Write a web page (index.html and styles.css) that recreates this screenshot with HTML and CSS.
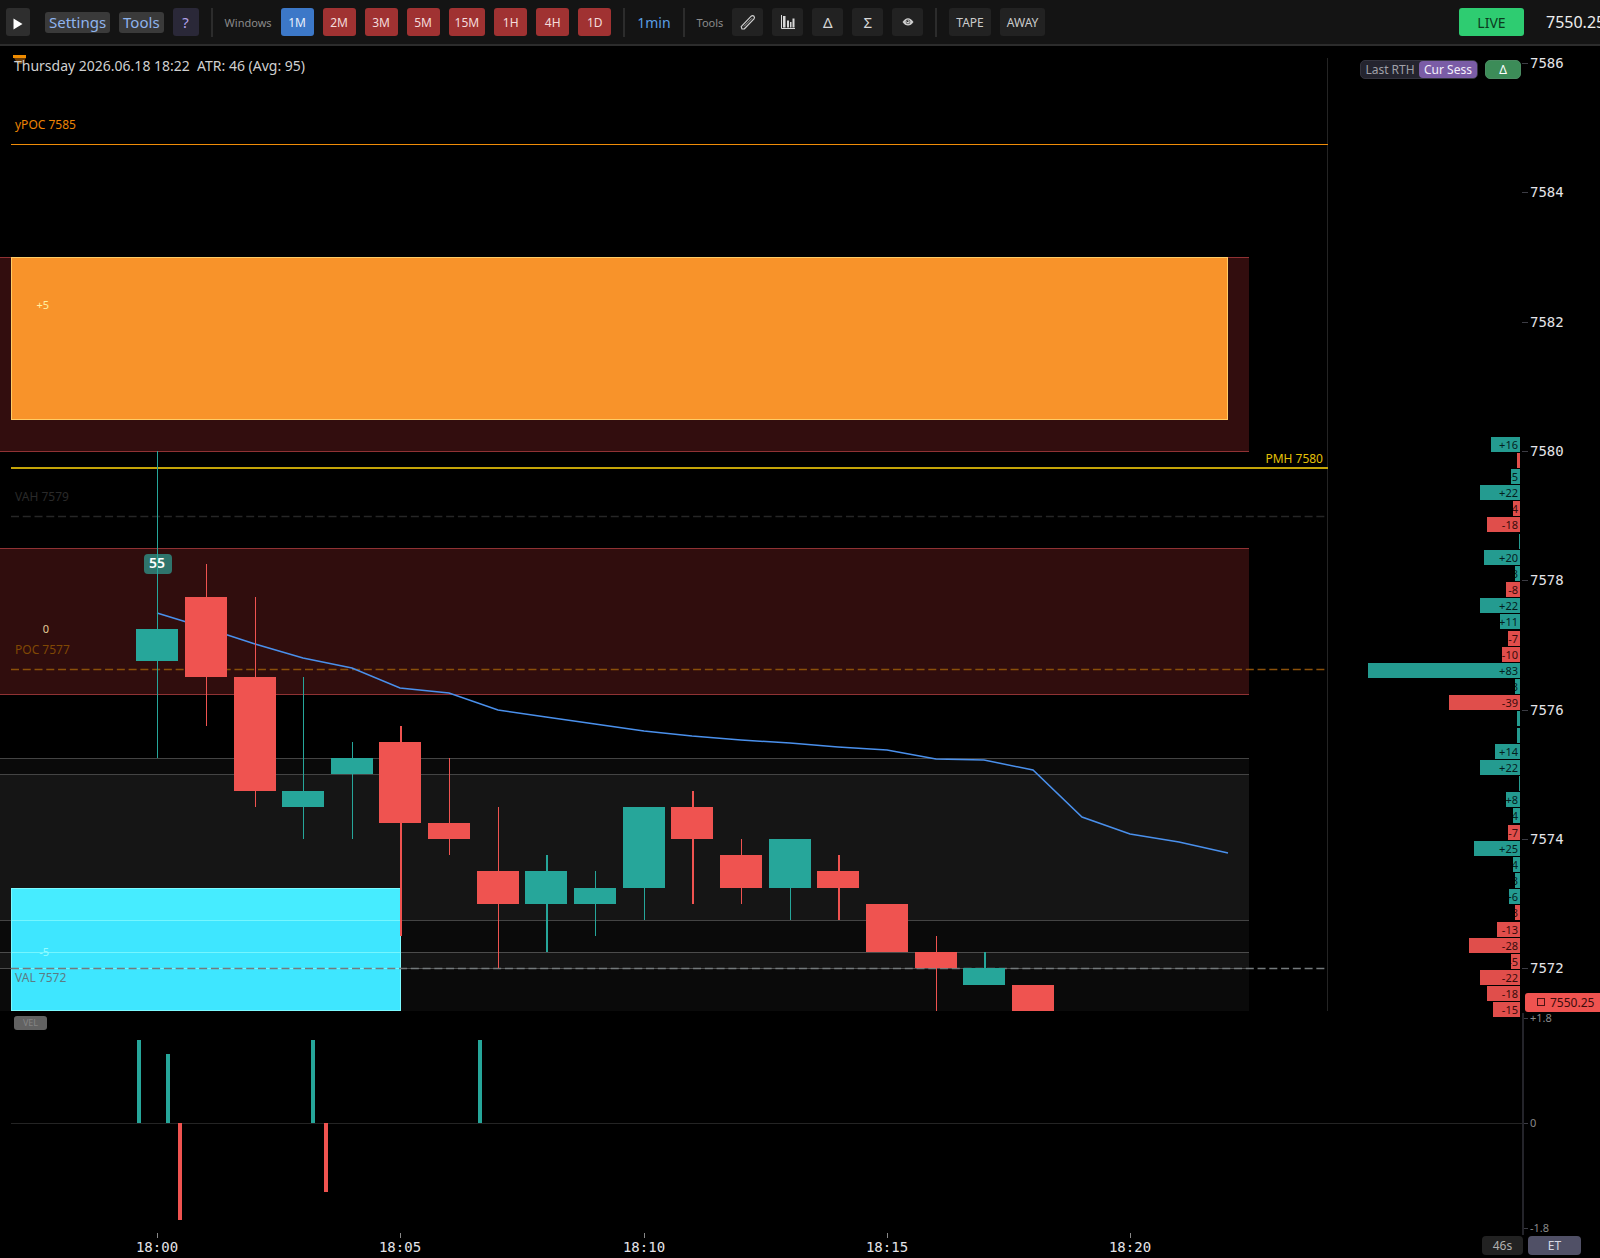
FILE: index.html
```html
<!DOCTYPE html>
<html lang="en">
<head>
<meta charset="utf-8">
<meta name="viewport" content="width=device-width, initial-scale=1">
<title>7550.25 – 1min chart</title>
<link rel="stylesheet" href="styles.css">
</head>
<body>
<header class="toolbar">
  <button class="btn btn-play" type="button" aria-label="Play">
    <svg width="10" height="12" viewBox="0 0 10 12" aria-hidden="true"><path d="M0.500 0.500L9.500 6L0.500 11.500Z" fill="#fff"/></svg>
  </button>
  <nav class="menus">
    <button class="menu" type="button">Settings</button>
    <button class="menu" type="button">Tools</button>
    <button class="btn btn-help" type="button">?</button>
  </nav>
  <span class="divider"></span>
  <span class="caption">Windows</span>
  <div class="group group-windows">
    <button class="btn btn-window is-active" type="button">1M</button>
    <button class="btn btn-window" type="button">2M</button>
    <button class="btn btn-window" type="button">3M</button>
    <button class="btn btn-window" type="button">5M</button>
    <button class="btn btn-window" type="button">15M</button>
    <button class="btn btn-window" type="button">1H</button>
    <button class="btn btn-window" type="button">4H</button>
    <button class="btn btn-window" type="button">1D</button>
  </div>
  <span class="divider"></span>
  <span class="interval">1min</span>
  <span class="divider"></span>
  <span class="caption">Tools</span>
  <div class="group group-tools">
    <button class="btn btn-tool" type="button" aria-label="Draw">
      <svg width="16" height="16" viewBox="0 0 16 16" aria-hidden="true"><path d="M1.200 12.600L11.200 2.200Q12.600 1 14 2.300Q15 3.500 14 4.900L4.200 15L2 15Z" fill="none" stroke="#d0d0d0" stroke-width="1.200" stroke-linejoin="round"/><path d="M4 12.400L12 4.300" fill="none" stroke="#a0a0a0" stroke-width="1"/></svg>
    </button>
    <button class="btn btn-tool" type="button" aria-label="Volume profile">
      <svg width="16" height="16" viewBox="0 0 16 16" aria-hidden="true"><path d="M1.500 1V14.500H15" fill="none" stroke="#d8d8d8" stroke-width="1"/><path d="M3 2h2.500v11.500H3zM7 6.500h2v7H7zM10 8h1.500v5.500H10zM12.500 4.500h2v9h-2z" fill="#d8d8d8"/></svg>
    </button>
    <button class="btn btn-tool" type="button">Δ</button>
    <button class="btn btn-tool" type="button">Σ</button>
    <button class="btn btn-tool" type="button" aria-label="Visibility">
      <svg width="12" height="10" viewBox="0 0 12 10" aria-hidden="true"><path d="M0.500 5Q3 1.200 6 1.200T11.500 5Q9 8.600 6 8.600T0.500 5Z" fill="#cfcfcf"/><circle cx="6" cy="4.800" r="2.400" fill="#505050"/><circle cx="6" cy="4.800" r="1.700" fill="#cfcfcf"/><circle cx="5.600" cy="4.200" r="0.900" fill="#303030"/></svg>
    </button>
  </div>
  <span class="divider"></span>
  <div class="group group-text">
    <button class="btn btn-text" type="button">TAPE</button>
    <button class="btn btn-text" type="button">AWAY</button>
  </div>
  <button class="btn btn-live" type="button">LIVE</button>
  <output class="last-price">7550.25</output>
</header>

<main class="chart">
  <svg class="canvas" id="chart" role="img" aria-label="One minute candlestick chart"></svg>
  <p class="status">Thursday 2026.06.18 18:22&nbsp; ATR: 46 (Avg: 95)</p>
  <div class="profile-controls">
    <div class="segmented">
      <button class="segment" type="button">Last RTH</button>
      <button class="segment is-active" type="button">Cur Sess</button>
    </div>
    <button class="delta-toggle" type="button">Δ</button>
  </div>
  <button class="vel" type="button">VEL</button>
  <div class="corner">
    <button class="chip" type="button">46s</button>
    <button class="chip chip-zone" type="button">ET</button>
  </div>
</main>
<script src="chart.js"></script>
</body>
</html>
```
FILE: styles.css
```css
* {
  box-sizing: border-box;
}

body {
  margin: 0;
  min-height: 100vh;
  display: flex;
  flex-direction: column;
  overflow: hidden;
  background: #000;
  color: #ccc;
  font-family: "Noto Sans", "Open Sans", sans-serif;
}

button {
  margin: 0;
  padding: 0;
  border: 0;
  font: inherit;
  color: inherit;
  white-space: nowrap;
  cursor: pointer;
}

/* Toolbar */

.toolbar {
  flex: none;
  display: flex;
  align-items: center;
  height: 46px;
  padding-left: 6px;
  background: #141414;
  border-bottom: 2px solid #2c2c2c;
  white-space: nowrap;
}

.toolbar > * {
  flex: none;
}

.btn {
  display: flex;
  align-items: center;
  justify-content: center;
  height: 28px;
  border-radius: 3px;
  font-size: 12px;
}

.btn-play {
  width: 24px;
  padding-top: 4px;
  background: #2e2e2e;
}

.menus {
  display: flex;
  align-items: center;
  gap: 9px;
  margin-left: 15px;
}

.menu {
  height: 21px;
  padding: 0 4px;
  border-radius: 3px;
  background: #3a3a3a;
  color: #8fb4ee;
  font-size: 15px;
  line-height: 20px;
}

.btn-help {
  width: 26px;
  background: #2a2838;
  color: #b4a4ec;
  font-size: 15px;
}

.divider {
  width: 2px;
  height: 29px;
  margin: 0 12px;
  background: #2c2c2c;
}

.caption {
  color: #8a8a8a;
  font-size: 11px;
}

.group {
  display: flex;
  gap: 9px;
  margin-left: 9px;
}

.btn-window {
  min-width: 33px;
  padding: 0 6px;
  background: #a03232;
  color: #f4dcdc;
}

.btn-window.is-active {
  background: #3c78c8;
  color: #e8f0fc;
}

.interval {
  color: #5a9fe6;
  font-size: 14px;
}

.btn-tool {
  width: 31px;
  background: #222;
  color: #d8d8d8;
  font-size: 15px;
}

.group-text {
  margin-left: 0;
}

.btn-text {
  padding: 0 7px;
  background: #222;
  color: #ccc;
}

.toolbar .btn-live {
  width: 65px;
  margin-left: auto;
  background: #2ecc71;
  color: #0c3a1e;
  font-size: 14px;
}

.last-price {
  width: 54px;
  margin-left: 22px;
  color: #eee;
  font-size: 16px;
}

/* Chart */

.chart {
  position: relative;
  flex: 1;
  min-height: 600px;
}

.canvas {
  position: absolute;
  inset: 0;
  width: 100%;
  height: 100%;
}

.canvas text {
  font-family: "Noto Sans", "Open Sans", sans-serif;
  font-size: 12px;
}

.canvas .axis-label {
  font-family: "DejaVu Sans Mono", monospace;
  font-size: 14px;
  fill: #e4e4e8;
}

.canvas .delta,
.canvas .velocity-label {
  font-size: 11px;
}

.canvas .velocity-label {
  fill: #8a8a8a;
}

.canvas .badge {
  font-size: 14px;
  font-weight: 600;
  fill: #fff;
}

.status {
  position: absolute;
  top: 10px;
  left: 14px;
  margin: 0;
  color: #d0d0d0;
  font-size: 14px;
  line-height: 20px;
}

.profile-controls {
  position: absolute;
  top: 14px;
  right: 79px;
  display: flex;
  gap: 7px;
  font-size: 12px;
  line-height: 17px;
}

.segmented {
  display: flex;
  border: 1px solid #34343e;
  border-radius: 5px;
  background: #24242e;
}

.segment {
  width: 58px;
  border-radius: 4px;
  background: none;
  color: #a0a0a8;
  font-size: 12px;
}

.segment.is-active {
  background: #7a5ca6;
  color: #f4f0fc;
}

.delta-toggle {
  width: 36px;
  border: 1px solid #4a8c62;
  border-radius: 5px;
  background: #3c8c58;
  color: #fff;
}

.vel {
  position: absolute;
  bottom: 228px;
  left: 14px;
  width: 33px;
  height: 14px;
  border-radius: 3px;
  background: #626262;
  color: #848484;
  font-size: 9px;
  line-height: 14px;
}

.corner {
  position: absolute;
  right: 19px;
  bottom: 3px;
  display: flex;
  gap: 5px;
}

.chip {
  width: 41px;
  height: 19px;
  border-radius: 4px;
  background: #222;
  color: #b0b0b0;
  font-size: 12px;
  line-height: 19px;
}

.chip-zone {
  width: 53px;
  background: #505066;
  color: #d8d8e4;
}
```
FILE: chart.js
```js
const GREEN = '#26a69a';
const RED = '#ef5350';

// open, high, low, close; one candle a minute from 18:00
const candles = [
  [7576.75, 7580, 7575.25, 7577.25], [7577.75, 7578.25, 7575.75, 7576.5],
  [7576.5, 7577.75, 7574.5, 7574.75], [7574.5, 7576.5, 7574, 7574.75],
  [7575, 7575.5, 7574, 7575.25], [7575.5, 7575.75, 7572.5, 7574.25],
  [7574.25, 7575.25, 7573.75, 7574], [7573.5, 7574.5, 7572, 7573],
  [7573, 7573.75, 7572.25, 7573.5], [7573, 7573.5, 7572.5, 7573.25],
  [7573.25, 7574.5, 7572.75, 7574.5], [7574.5, 7574.75, 7573, 7574],
  [7573.75, 7574, 7573, 7573.25], [7573.25, 7574, 7572.75, 7574],
  [7573.5, 7573.75, 7572.75, 7573.25], [7573, 7573, 7572.25, 7572.25],
  [7572.25, 7572.5, 7570, 7572], [7571.75, 7572.25, 7571.75, 7572],
  [7571.75, 7571.75, 7569, 7569]
];

const wideWicks = new Set([5, 8, 11, 14, 17]);

const average = [7577.49, 7577.27, 7577.01, 7576.8, 7576.64, 7576.34, 7576.26,
  7575.99, 7575.88, 7575.78, 7575.67, 7575.59, 7575.53, 7575.48, 7575.42,
  7575.38, 7575.23, 7575.22, 7575.07, 7574.34, 7574.08, 7573.96, 7573.78];

// net delta per quarter point, from 7580 down
const deltas = [16, -2, 5, 22, -4, -18, 1, 20, 3, -8, 22, 11, -7, -10, 83, 3,
  -39, 2, 2, 14, 22, 1, 8, 4, -7, 25, 4, 3, 6, -3, -13, -28, -5, -22, -18, -15];

// x position, height above (+) or below (-) the zero line
const velocity = [[137, 83], [166, 69], [178, -97], [311, 83], [324, -69], [478, 83]];

const svg = document.getElementById('chart');

function el(parent, name, attrs, text) {
  const node = document.createElementNS('http://www.w3.org/2000/svg', name);
  for (const key in attrs) node.setAttribute(key, attrs[key]);
  if (text !== undefined) node.textContent = text;
  parent.appendChild(node);
  return node;
}

function draw() {
  const W = svg.clientWidth;
  const H = svg.clientHeight;
  svg.replaceChildren();

  const bottom = H - 247;
  const right = W - 272;
  const point = bottom / 965 * 64.67;
  const y = price => Math.round(bottom / 965 * 405 + (7580 - price) * point);
  const x = minute => Math.round(157.2 + minute * 48.65);

  const pane = el(svg, 'svg', { x: 0, y: 0, width: W, height: bottom });
  const rect = (parent, left, top, width, height, fill) =>
    el(parent, 'rect', { x: left, y: top, width, height, fill });
  const zone = (high, low, fill, line) => {
    rect(pane, 0, y(high), right - 79, y(low) - y(high), fill);
    rect(pane, 0, y(high), right - 79, 1, line);
    rect(pane, 0, y(low), right - 79, 1, line);
  };

  rect(pane, right - 1, 12, 1, bottom, '#242424');
  zone(7583, 7580, '#320d0e', '#903234');
  zone(7578.5, 7576.25, '#300d0d', '#903234');
  zone(7575.25, 7575, '#0a0a0a', '#444');
  zone(7572.75, 7572.25, '#0a0a0a', '#444');
  zone(7572, 7571, '#0a0a0a', '#444');
  zone(7575, 7572.75, '#151515', '#444');
  zone(7572.25, 7572, '#151515', '#4c4c4c');

  // highlighted ranges
  el(pane, 'rect', { x: 11.5, y: y(7583) + 0.5, width: x(22) - 12, height: y(7580.5) - y(7583), fill: '#f8932a', stroke: '#ffcc66' });
  el(pane, 'rect', { x: 11.5, y: y(7573.25) + 0.5, width: x(5) - 11, height: bottom - y(7573.25) - 1, fill: '#3ee6ff', stroke: '#7cfaff' });
  rect(pane, 12, y(7573.25) + 1, x(5) - 12, y(7572.75) - y(7573.25), '#46ecff');
  for (const price of [7572.75, 7572.25, 7572]) rect(pane, 12, y(price), x(5) - 12, 1, '#74f6ff');

  // reference levels
  const dashed = (price, color) => el(pane, 'line', {
    x1: 11, x2: right, y1: y(price) + 0.5, y2: y(price) + 0.5,
    stroke: color, 'stroke-width': 1.5, 'stroke-dasharray': '8 3.76'
  });
  rect(pane, 11, y(7584.75), right - 11, 1, '#f08c08');
  rect(pane, 11, y(7579.75), right - 11, 2, '#c4a408');
  dashed(7579, '#262626');
  dashed(7576.63, '#8a500a');
  dashed(7572, '#747a7c');
  const level = (text, left, top, fill, anchor) =>
    el(pane, 'text', { x: left, y: top, fill, 'text-anchor': anchor || 'start' }, text);
  level('yPOC 7585', 15, y(7584.75) - 15, '#ec8404');
  level('PMH 7580', right - 5, y(7579.75) - 4, '#e4c008', 'end');
  level('VAH 7579', 15, y(7579) - 15, '#2a2a2a');
  level('POC 7577', 15, y(7576.63) - 15, '#804804');
  level('VAL 7572', 15, y(7572) + 14, '#5c7c84');

  // moving average, candles over it
  el(pane, 'polyline', {
    points: average.map((price, i) => `${x(i)},${y(price)}`).join(' '),
    fill: 'none', stroke: '#4a90ec', 'stroke-width': 1.5
  });
  rect(pane, 144, y(7578.4), 28, 20, '#2f746c').setAttribute('rx', 4);
  el(pane, 'text', { class: 'badge', x: x(0), y: y(7578.4) + 14, 'text-anchor': 'middle' }, '55');
  candles.forEach(([open, high, low, close], i) => {
    const color = close > open ? GREEN : RED;
    const top = y(Math.max(open, close));
    const wick = wideWicks.has(i) ? 2 : 1;
    rect(pane, x(i), y(high), wick, y(low) - y(high), color);
    rect(pane, x(i) - 21, top, 42, y(Math.min(open, close)) - top, color);
  });

  const score = (text, top, fill) =>
    el(pane, 'text', { class: 'delta', x: 49, y: top, fill, 'text-anchor': 'end' }, text);
  score('+5', y(7582.25) + 4, '#fff0a0');
  score('0', y(7577.27) + 5, '#e4cc98');
  score('-5', y(7572.25) + 4, '#94fcff');

  // session marker tucked behind the status line
  rect(pane, 13, 9, 13, 3, '#f08c00');
  el(pane, 'path', { d: 'M14 12H26L22 18H18Z', fill: '#6a3c08' });

  // price axis
  for (let price = 7586; price >= 7572; price -= 2) {
    rect(svg, W - 78, y(price), 6, 1, '#3c3c44');
    el(svg, 'text', { class: 'axis-label', x: W - 70, y: y(price) + 5 }, price);
  }

  // delta profile
  deltas.forEach((delta, i) => {
    const width = Math.max(1, Math.floor(Math.abs(delta) * 1.84));
    const top = Math.round(y(7580) - 14.5 + i * point / 4);
    const row = el(svg, 'svg', { x: W - 80 - width, y: top, width, height: 15 });
    rect(row, 0, 0, width, 15, delta > 0 ? '#249b90' : '#e04e4b');
    if (Math.abs(delta) > 2) {
      el(row, 'text', {
        class: 'delta', x: width - 2, y: 12, 'text-anchor': 'end',
        fill: delta > 0 ? '#04201e' : '#380c0c'
      }, (delta > 0 ? '+' : '') + delta);
    }
  });

  // last price
  rect(svg, W - 75, bottom - 18, 90, 19, RED).setAttribute('rx', 3);
  el(svg, 'rect', { x: W - 62.5, y: bottom - 12.5, width: 7, height: 7, fill: 'none', stroke: '#4a1414' });
  el(svg, 'text', { x: W - 50, y: bottom - 4, fill: '#3c0c0c' }, '7550.25');

  // velocity pane
  const zero = H - 135;
  rect(svg, 11, zero, W - 88, 1, '#242424');
  for (const [left, size] of velocity) {
    rect(svg, left, size > 0 ? zero - size : zero, 4, Math.abs(size), size > 0 ? GREEN : RED);
  }
  rect(svg, W - 78, H - 245, 2, 222, '#24242a');
  for (const [text, offset] of [['+1.8', -105], ['0', 0], ['-1.8', 105]]) {
    rect(svg, W - 76, zero + offset, 4, 1, '#3c3c44');
    el(svg, 'text', { class: 'velocity-label', x: W - 70, y: zero + offset + 4 }, text);
  }

  // time axis
  for (let minute = 0; minute <= 20; minute += 5) {
    rect(svg, x(minute), H - 25, 1, 5, '#888');
    el(svg, 'text', { class: 'axis-label', x: x(minute), y: H - 6, 'text-anchor': 'middle' },
      '18:' + String(minute).padStart(2, '0'));
  }
}

new ResizeObserver(draw).observe(svg);
draw();
```
